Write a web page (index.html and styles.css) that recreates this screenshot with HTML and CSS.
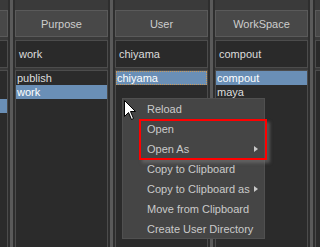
FILE: index.html
```html
<!DOCTYPE html>
<html>
<head>
<meta charset="utf-8">
<link rel="stylesheet" href="styles.css">
</head>
<body>
<div class="app">
  <div class="cols">
    <div class="col">
      <div class="hdr"></div>
      <div class="field"></div>
      <div class="list">
        <div class="row"></div>
        <div class="row"></div>
        <div class="row sel"></div>
      </div>
    </div>
    <div class="sep"></div>
    <div class="col">
      <div class="hdr">Purpose</div>
      <div class="field">work</div>
      <div class="list">
        <div class="row">publish</div>
        <div class="row sel">work</div>
      </div>
    </div>
    <div class="sep"></div>
    <div class="col">
      <div class="hdr">User</div>
      <div class="field">chiyama</div>
      <div class="list">
        <div class="row sel focus">chiyama</div>
      </div>
    </div>
    <div class="sep"></div>
    <div class="col">
      <div class="hdr">WorkSpace</div>
      <div class="field">compout</div>
      <div class="list">
        <div class="row sel">compout</div>
        <div class="row">maya</div>
      </div>
    </div>
    <div class="sep"></div>
    <div class="col">
      <div class="hdr"></div>
      <div class="field"></div>
      <div class="list"></div>
    </div>
  </div>

  <div class="menu">
    <div class="item">Reload</div>
    <div class="item">Open</div>
    <div class="item sub">Open As</div>
    <div class="item">Copy to Clipboard</div>
    <div class="item sub">Copy to Clipboard as</div>
    <div class="item">Move from Clipboard</div>
    <div class="item">Create User Directory</div>
  </div>
  <div class="highlight"></div>
  <svg class="cursor" width="13" height="21" viewBox="0 0 13 21">
    <path d="M0.5 0.5 L0.5 16.5 L4.5 12.5 L7.5 19.5 L9.5 18.5 L6.5 11.5 L11.5 11.5 Z" fill="#fff" stroke="#000" stroke-width="1" stroke-linejoin="miter"/>
  </svg>
</div>
</body>
</html>
```

FILE: styles.css
```css
html, body {
  margin: 0;
  padding: 0;
  background: #2b2b2b;
  overflow: hidden;
}
body {
  width: 320px;
  height: 247px;
  font-family: "Liberation Sans", Arial, sans-serif;
  font-size: 11px;
  color: #d6d6d6;
}
.app {
  position: relative;
  width: 320px;
  height: 247px;
  overflow: hidden;
}
.cols {
  display: flex;
  height: 247px;
  margin-left: -85px;
}
.col {
  flex: 0 0 93px;
  display: flex;
  flex-direction: column;
  padding-top: 10px;
  background: #3a3a3a;
}
.sep {
  flex: 0 0 3px;
  margin: 0 2px;
  background: #5a5a5a;
}
.cols .sep {
  box-shadow: -2px 0 0 #2e2e2e, 2px 0 0 #2e2e2e;
}
.hdr {
  height: 25px;
  border: 1px solid #5a5a5a;
  background: #484848;
  color: #cdcdcd;
  display: flex;
  align-items: center;
  justify-content: center;
}
.field {
  margin-top: 3px;
  height: 26px;
  border: 1px solid #4c4c4c;
  background: #2a2a2a;
  color: #dcdcdc;
  display: flex;
  align-items: center;
  padding-left: 3px;
}
.list {
  margin-top: 2px;
  flex: 1;
  border: 1px solid #4c4c4c;
  border-bottom: none;
  background: #2b2b2b;
}
.row {
  height: 14px;
  line-height: 14px;
  padding-left: 1px;
  color: #dedede;
  white-space: nowrap;
}
.row.sel {
  background: #6a8fb6;
  color: #fff;
}
.row.focus {
  outline: 1px dotted #c99a5c;
  outline-offset: -1px;
}
.menu {
  position: absolute;
  left: 122px;
  top: 98px;
  width: 143px;
  height: 141px;
  box-sizing: border-box;
  padding-top: 0;
  background: #454545;
  border: 1px solid #505050;
}
.item {
  position: relative;
  height: 20px;
  line-height: 20px;
  padding-left: 24px;
  color: #cacaca;
  white-space: nowrap;
}
.item.sub::after {
  content: "";
  position: absolute;
  left: 131px;
  top: 7px;
  border-left: 4px solid #c8c8c8;
  border-top: 3.5px solid transparent;
  border-bottom: 3.5px solid transparent;
}
.highlight {
  position: absolute;
  left: 139px;
  top: 119px;
  width: 124px;
  height: 37px;
  border: 2px solid #ff0000;
  box-shadow: 3px 3px 3px rgba(120, 120, 120, 0.55);
}
.cursor {
  position: absolute;
  left: 124px;
  top: 100px;
}
```
